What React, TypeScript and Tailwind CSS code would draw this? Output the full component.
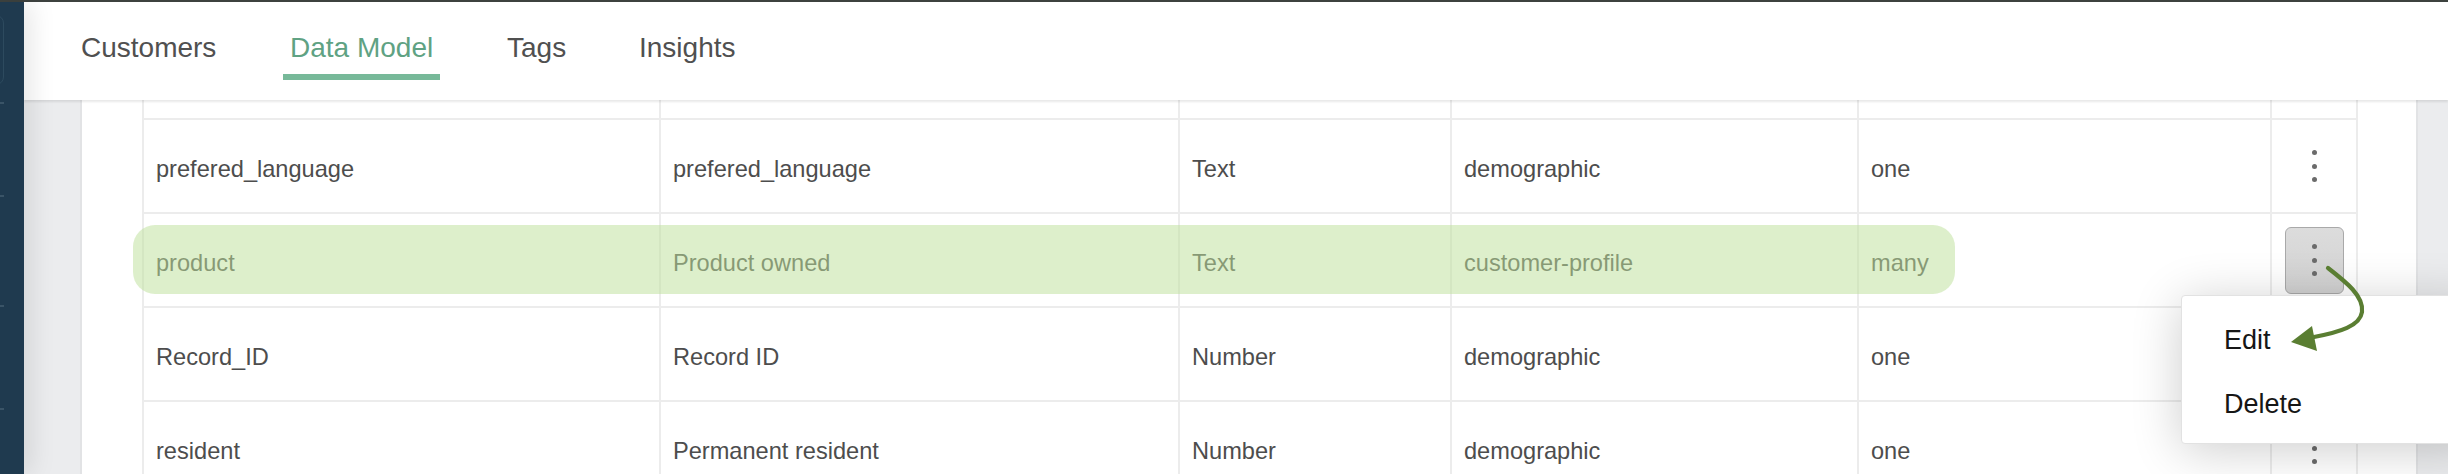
import React from "react";

const rows: string[][] = [
  ["prefered_language", "prefered_language", "Text", "demographic", "one"],
  ["product", "Product owned", "Text", "customer-profile", "many"],
  ["Record_ID", "Record ID", "Number", "demographic", "one"],
  ["resident", "Permanent resident", "Number", "demographic", "one"],
];

const colW = ["w-[517px]", "w-[519px]", "w-[272px]", "w-[407px]", "w-[413px]"];

function Dots() {
  return (
    <div className="flex flex-col items-center gap-[8.3px]">
      <span className="block h-[5px] w-[5px] rounded-full bg-[#6b6b6b]" />
      <span className="block h-[5px] w-[5px] rounded-full bg-[#6b6b6b]" />
      <span className="block h-[5px] w-[5px] rounded-full bg-[#6b6b6b]" />
    </div>
  );
}

function Kebab({ active }: { active?: boolean }) {
  if (active) {
    return (
      <div className="flex h-[67px] w-[59px] items-center justify-center rounded-[6px] border-[1.5px] border-[#a9a9a9] bg-gradient-to-b from-[#dcdcdc] to-[#d2d2d2]">
        <Dots />
      </div>
    );
  }
  return <Dots />;
}

const tabs = [
  { label: "Customers", w: "w-[149px]", active: false },
  { label: "Data Model", w: "w-[157px]", active: true },
  { label: "Tags", w: "w-[72px]", active: false },
  { label: "Insights", w: "w-[109px]", active: false },
];

export default function App() {
  return (
    <div className="relative flex h-[474px] w-[2448px] flex-col overflow-hidden bg-[#ebecee] font-['Liberation_Sans',Arial,sans-serif]">
      <div className="h-[2px] w-full shrink-0 bg-[#3d423f]" />
      <div className="flex min-h-0 flex-1">
        {/* Sidebar */}
        <div className="relative z-20 flex w-[24px] shrink-0 flex-col bg-[#1f3a4f] shadow-[4px_0_28px_rgba(0,0,0,0.13)]">
          <div className="-ml-[60px] mt-[13px] h-[70px] w-[64px] rounded-[8px] border border-[#2d4a5e]" />
          <div className="mt-[17px] h-[2px] w-[4px] bg-[#3a5467]" />
          <div className="mt-[91px] h-[2px] w-[4px] bg-[#3a5467]" />
          <div className="mt-[108px] h-[2px] w-[4px] bg-[#3a5467]" />
          <div className="mt-[101px] h-[2px] w-[4px] bg-[#3a5467]" />
        </div>

        {/* Main */}
        <div className="flex min-w-0 flex-1 flex-col">
          {/* Header */}
          <div className="relative z-10 flex h-[98px] shrink-0 gap-[60px] bg-white pl-[50px] shadow-[0_2px_2px_rgba(0,0,0,0.09)]">
            {tabs.map((t) => (
              <div key={t.label} className={`${t.w} flex flex-col pt-[30px]`}>
                <span
                  className={`whitespace-nowrap pl-[7px] text-[28px] leading-[32px] ${
                    t.active ? "text-[#5fa283]" : "text-[#505050]"
                  }`}
                >
                  {t.label}
                </span>
                <div className={`mt-[10px] h-[6px] w-full ${t.active ? "bg-[#77b999]" : "bg-transparent"}`} />
              </div>
            ))}
          </div>

          {/* Content */}
          <div className="flex min-h-0 flex-1">
            <div className="ml-[56px] mr-[31px] flex flex-1 flex-col border-x-2 border-[#e2e3e5] bg-white pl-[60px] pr-[58px]">
              {/* partial top row */}
              <div className="flex h-[20px] shrink-0 border-b-2 border-[#ececec]">
                {colW.map((w, i) => (
                  <div key={i} className={`${w} shrink-0 border-l-2 border-[#ececec]`} />
                ))}
                <div className="w-[88px] shrink-0 border-x-2 border-[#ececec]" />
              </div>
              {rows.map((r, ri) => (
                <div key={ri} className="flex h-[94px] shrink-0 border-b-2 border-[#ececec]">
                  {r.map((c, ci) => (
                    <div
                      key={ci}
                      className={`${colW[ci]} flex shrink-0 items-center border-l-2 border-[#ececec] pl-[12px] pt-[6px] text-[23.6px] leading-[28px] text-[#4d4d4d]`}
                    >
                      {c}
                    </div>
                  ))}
                  <div className="flex w-[88px] shrink-0 items-center justify-center border-x-2 border-[#ececec]">
                    <Kebab active={ri === 1} />
                  </div>
                </div>
              ))}
            </div>
          </div>
        </div>
      </div>

      {/* Highlight annotation over the product row */}
      <div className="absolute left-[133px] top-[225px] h-[69px] w-[1822px] rounded-[22px] bg-[rgba(189,224,155,0.52)]" />

      {/* Dropdown menu */}
      <div className="absolute left-[2181px] top-[295px] z-30 h-[149px] w-[300px] rounded-[4px] border border-[#e2e2e2] bg-white pl-[42px] pt-[12px] shadow-[0_6px_50px_rgba(0,0,0,0.2)]">
        <div className="text-[27px] leading-[64px] text-[#161616]">Edit</div>
        <div className="text-[27px] leading-[64px] text-[#161616]">Delete</div>
      </div>

      {/* Arrow annotation */}
      <svg
        className="absolute left-[2280px] top-[260px] z-40 overflow-visible"
        width="100"
        height="100"
        viewBox="0 0 100 100"
      >
        <path
          d="M48 8 C66 22 84 36 82 52 C80 66 60 72 34 77"
          fill="none"
          stroke="#5a7e32"
          strokeWidth="4.2"
          strokeLinecap="round"
        />
        <polygon points="11,82 32,66 37,91" fill="#5a7e32" />
      </svg>
    </div>
  );
}
